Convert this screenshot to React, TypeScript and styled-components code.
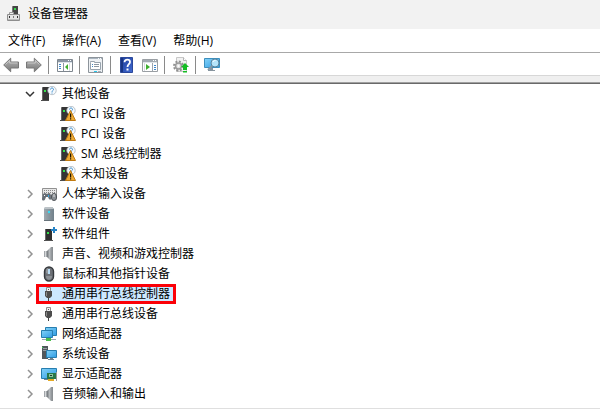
import React from 'react';
import styled, { createGlobalStyle } from 'styled-components';

const GlobalStyle = createGlobalStyle`
  * { box-sizing: border-box; }
  body {
    margin: 0;
    background: #fff;
    color: #000;
    font: 12px/20px "Open Sans", "Noto Sans CJK SC", sans-serif;
  }
  button { font: inherit; color: inherit; background: none; border: 0; padding: 0; margin: 0; }
  ul { list-style: none; margin: 0; padding: 0; }
`;

const Window = styled.div`
  display: flex;
  flex-direction: column;
  min-height: 100vh;
`;

const TitleBar = styled.header`
  display: flex;
  align-items: center;
  gap: 6px;
  height: 29px;
  padding: 0 6px 2px;
  background: #f2f2f2;
`;

const Title = styled.h1`
  margin: 0;
  font-size: 12px;
  font-weight: 400;
`;

const MenuBar = styled.nav`
  display: flex;
  gap: 17px;
  height: 24px;
  padding: 0 8px;
  border-bottom: 1px solid #a8a8a8;
`;

const MenuButton = styled.button`
  line-height: 24px;
`;

const Toolbar = styled.div`
  display: flex;
  align-items: center;
  height: 23px;
  padding: 2px 3px 0;
  border-bottom: 1px solid #d7d7d7;
`;

const ToolGroup = styled.div`
  display: flex;
  gap: 7px;
  align-items: center;

  & + & {
    border-left: 1px solid #8a8a8a;
    margin-left: 6px;
    padding-left: 8px;
  }
`;

const ToolButton = styled.button`
  display: flex;
  height: 18px;
  align-items: center;
`;

const Strip = styled.div`
  height: 8px;
  background: #efefef;
  border-bottom: 1px solid #696969;
  box-shadow: inset 0 -1px #a0a0a0;
`;

const Content = styled.main`
  flex: 1;
  border-bottom: 1px solid #dfdfdf;
`;

const Row = styled.div<{ $child?: boolean }>`
  display: flex;
  align-items: center;
  height: 20px;
  padding-left: ${(p) => (p.$child ? 55 : 24)}px;
`;

const Expander = styled.button`
  display: flex;
  align-items: center;
  justify-content: center;
  width: 12px;
  height: 20px;
`;

const NodeButton = styled.button<{ $selected?: boolean }>`
  display: flex;
  align-items: center;
  gap: 5px;
  height: 20px;
  padding: 0 6px 0 5px;
  white-space: nowrap;
  background: ${(p) => (p.$selected ? '#cce8ff' : 'transparent')};
  box-shadow: ${(p) => (p.$selected ? 'inset 0 0 0 3px #fb0007' : 'none')};
`;

const Icon = styled.svg`
  display: block;
  flex: none;
`;

const HiddenDefs = styled.svg`
  position: absolute;
`;

const Glyph = ({ children }: { children: React.ReactNode }) => (
  <Icon width={16} height={16} viewBox="0 0 16 16" aria-hidden="true">
    {children}
  </Icon>
);

const Gradients = () => (
  <HiddenDefs width={0} height={0} aria-hidden="true">
    <defs>
      <linearGradient id="screen" x1="0" y1="0" x2="1" y2="1">
        <stop offset="0" stopColor="#83d2f8" />
        <stop offset="1" stopColor="#2f9be3" />
      </linearGradient>
      <linearGradient id="steel" x1="0" y1="0" x2="0" y2="1">
        <stop offset="0" stopColor="#b4b4b4" />
        <stop offset="0.5" stopColor="#989898" />
        <stop offset="1" stopColor="#757575" />
      </linearGradient>
      <linearGradient id="cone" x1="0" y1="0" x2="1" y2="0">
        <stop offset="0" stopColor="#6f7478" />
        <stop offset="0.5" stopColor="#b5b9bc" />
        <stop offset="1" stopColor="#8c9195" />
      </linearGradient>
      <linearGradient id="case" x1="0" y1="0" x2="1" y2="0">
        <stop offset="0" stopColor="#a0aab1" />
        <stop offset="1" stopColor="#71808a" />
      </linearGradient>
      <linearGradient id="help" x1="0" y1="0" x2="1" y2="1">
        <stop offset="0" stopColor="#1f3f9c" />
        <stop offset="1" stopColor="#4069d0" />
      </linearGradient>
    </defs>
  </HiddenDefs>
);

const Tower = () => (
  <>
    <path d="M1 2l1-1h6v13H1z" fill="#353535" />
    <path d="M1 2l1-1v13H1z" fill="#666" />
    <path d="M0 14h8v1H0z" fill="#4d4d4d" />
    <path d="M3 4h2v2H3z" fill="#35e04b" />
  </>
);

const Question = () => (
  <>
    <circle cx="11" cy="4.500" r="4.200" fill="#f5f9fc" stroke="#a9b4bc" strokeWidth="0.800" />
    <path d="M9.500 3.500c0-2 3-2 3 0 0 1.200-1.500 1-1.500 2.300M11 6.500v1" fill="none" stroke="#3d8fd0" />
  </>
);

const icons = {
  app: (
    <Glyph>
      <path d="M6 1l1-1h5v9H6z" fill="#444" />
      <path d="M6 1l1-1v8H6z" fill="#777" />
      <path d="M8 2h2v2H8z" fill="#38da4c" />
      <path d="M3.500 8.500v-2h4v2" fill="#eee" stroke="#999" />
      <path d="M1.500 8.500h12v6h-12z" fill="#e4e4e4" stroke="#8d8d8d" />
      <path d="M2 13h11v1H2z" fill="#bdbdbd" />
      <path d="M3 10h1v2H3zM11 10h1v2h-1z" fill="#333" />
      <path d="M7 10h1v2H7z" fill="#777" />
    </Glyph>
  ),
  back: (
    <Glyph>
      <path d="M.7 8l7-6.800V5h7.800v6H7.700v3.800z" fill="url(#steel)" stroke="#777" strokeLinejoin="round" />
      <path d="M2.500 7.500l4.200-4V6h7.800" fill="none" stroke="#c8c8c8" />
    </Glyph>
  ),
  forward: (
    <Glyph>
      <path d="M15.300 8l-7-6.800V5H.5v6h7.800v3.800z" fill="url(#steel)" stroke="#777" strokeLinejoin="round" />
      <path d="M1.500 6h7.800V3.500l4.200 4" fill="none" stroke="#c8c8c8" />
    </Glyph>
  ),
  tree: (
    <Glyph>
      <path d="M.5 2.500h15v12H.5z" fill="#fff" stroke="#7e868e" />
      <path d="M1 3h14v3H1z" fill="#8995a3" />
      <path d="M1 5h14v1H1z" fill="#dce3ea" />
      <path d="M11 3h1v1h-1zM13 3h1v1h-1z" fill="#fff" />
      <path d="M6 6h1v8H6z" fill="#8995a3" />
      <path d="M2 7h2v1H2zM2 9h2v1H2zM2 11h2v1H2z" fill="#3d87ce" />
      <path d="M11 7v6l-3-3z" fill="#3eaf30" />
      <path d="M12 6h1v8h-1z" fill="#d7dde2" />
    </Glyph>
  ),
  properties: (
    <Glyph>
      <path d="M.5.5h14v15H.5z" fill="#eef1f4" stroke="#8d949b" />
      <path d="M1 1h13v1H1z" fill="#a9b4bf" />
      <path d="M10 1h1v1h-1zM12 1h1v1h-1z" fill="#fff" />
      <path d="M2.500 5.500v-1h4v1h6v7h-10z" fill="#fff" stroke="#98a3ad" />
      <path d="M6 7h5v1H6zM6 9h5v1H6z" fill="#8c97a1" />
      <path d="M4 7h1v1H4zM4 9h1v1H4z" fill="#4388c4" />
      <path d="M6 14h3v1H6z" fill="#27c5e8" />
      <path d="M10 14h3v1h-3z" fill="#a8afb5" />
    </Glyph>
  ),
  help: (
    <Glyph>
      <path d="M1.500.5h12v15h-12z" fill="url(#help)" stroke="#2b489b" />
      <path d="M2 1h2v14H2z" fill="#183583" />
      <path d="M5.500 5.200C5.500 1.800 11 2 11 5c0 2.200-2.500 2.300-2.500 5" fill="none" stroke="#fff" strokeWidth="1.800" />
      <path d="M7.500 11.500h2v2h-2z" fill="#fff" />
    </Glyph>
  ),
  action: (
    <Glyph>
      <path d="M.5 2.500h15v12H.5z" fill="#fff" stroke="#9a9fa4" />
      <path d="M1 3h14v3H1z" fill="#a3abb3" />
      <path d="M1 5h14v1H1z" fill="#e0e5e9" />
      <path d="M11 3h1v1h-1zM13 3h1v1h-1z" fill="#fff" />
      <path d="M4 7v6l4-3z" fill="#3eaf30" />
      <path d="M2 6h1v8H2z" fill="#d7dde2" />
      <path d="M10 6h1v8h-1z" fill="#9ba5af" />
      <path d="M12 8h2v1h-2zM12 10h2v1h-2zM12 12h2v1h-2z" fill="#3d87ce" />
    </Glyph>
  ),
  update: (
    <Glyph>
      <path d="M3.500.5h7l3 3v11h-10z" fill="#f2f2f2" stroke="#c8c8c8" />
      <path d="M10.500.5v3h3" fill="#fff" stroke="#b5b5b5" />
      <circle cx="5.500" cy="9" r="4.500" fill="none" stroke="#909090" strokeWidth="2" strokeDasharray="2 1.500" />
      <circle cx="5.500" cy="9" r="3" fill="#e3e3e3" stroke="#9a9a9a" strokeWidth="1.500" />
      <circle cx="5.500" cy="9" r="1" fill="#fff" />
      <path d="M12 6l4 4h-2v3h-4v-3H8z" fill="#16bd25" />
      <path d="M10 14h4v1.500h-4z" fill="#16bd25" />
    </Glyph>
  ),
  scan: (
    <Glyph>
      <path d="M.5 1.500h15v9H.5z" fill="url(#screen)" stroke="#3d8fbd" />
      <path d="M6 11h3v2h2v1H4v-1h2z" fill="#87949e" />
      <path d="M8.500 8.500L4 13" stroke="#8497a5" strokeWidth="2" />
      <circle cx="11" cy="6" r="4" fill="#b5e4fa" stroke="#5b849d" />
      <path d="M9 5c.5-1.200 1.500-1.500 2.500-1.500" stroke="#fff" fill="none" />
    </Glyph>
  ),
  other: (
    <Glyph>
      <Tower />
      <Question />
    </Glyph>
  ),
  warning: (
    <Glyph>
      <Tower />
      <Question />
      <path d="M10.500 4.500l5 10h-10z" fill="#edaa35" stroke="#c07a12" strokeLinejoin="round" />
      <path d="M10 7.500h1.200v4H10zM10 12.300h1.200v1.200H10z" fill="#1c1504" />
    </Glyph>
  ),
  hid: (
    <Glyph>
      <path d="M1.500 2.500h14v7h-14z" fill="#e8e8e8" stroke="#919191" />
      <path d="M3 4.500h12M3 6.500h12" stroke="#888" strokeDasharray="1 1" />
      <path d="M1 13c0-4 1-6 3-6 1 0 1 1 2 1s1-1 2-1c2 0 2 3 2 6 0 1-2 1-2.500-1l-.5-1H5l-.8 2C3.500 15 1 15 1 13z" fill="#666d75" />
      <path d="M3 9h1v1H3z" fill="#fff" />
      <path d="M7 9h1v2H7z" fill="#39a9e8" />
      <rect x="10.500" y="7.500" width="5" height="7" rx="2.500" fill="#8a8f94" stroke="#515559" />
      <path d="M12.500 8h1v3h-1z" fill="#ddd" />
    </Glyph>
  ),
  software: (
    <Glyph>
      <path d="M3 3l1-2h7l2 2v12H3z" fill="url(#case)" />
      <path d="M3 3l1-2h7l2 2z" fill="#bcc3c7" />
      <path d="M3 14h10v1H3z" fill="#67737b" />
      <circle cx="8" cy="6" r="1.200" fill="#3bdcf5" />
    </Glyph>
  ),
  component: (
    <Glyph>
      <path d="M4 3h7v11H4z" fill="#303030" />
      <path d="M4 3h1v11H4z" fill="#666" />
      <path d="M3 14h9v1H3z" fill="#505050" />
      <path d="M6 6h2v2H6z" fill="#35e04b" />
      <path d="M12 1h2v2h2v2h-2v2h-2V5h-2V3h2z" fill="#2683c6" />
    </Glyph>
  ),
  speaker: (
    <Glyph>
      <path d="M3 5h3v6H3z" fill="#a1a5a9" />
      <path d="M6 5l4-4h1v14h-1l-4-4z" fill="url(#cone)" />
      <path d="M11 1h1v14h-1z" fill="#8b9093" />
      <path d="M4 5h1v6H4z" fill="#d5d8da" />
    </Glyph>
  ),
  mouse: (
    <Glyph>
      <rect x="3.500" y="1" width="9" height="14" rx="4.500" fill="#6c7076" stroke="#35383c" strokeWidth="1.400" />
      <path d="M5 7V5c0-2 1-3 2-3v6" fill="#92969b" />
      <path d="M7 3h2v5H7z" fill="#b8dcf5" />
      <path d="M5 10c0 5 6 5 6 0" fill="#8c9095" />
    </Glyph>
  ),
  usb: (
    <Glyph>
      <path d="M5.500 1.500h4v4h-4z" fill="#eee" stroke="#8c8c8c" />
      <path d="M7 3h1v1H7z" fill="#555" />
      <path d="M4 5h7v5l-2 2H6l-2-2z" fill="#4d4d4d" />
      <path d="M5 6h1v4H5z" fill="#8a8a8a" />
      <path d="M7 12h1v3H7z" fill="#444" />
    </Glyph>
  ),
  network: (
    <Glyph>
      <path d="M4.500 1.500h11v8h-11z" fill="url(#screen)" stroke="#287eaf" />
      <path d="M.5 4.500h11v7H.5z" fill="url(#screen)" stroke="#287eaf" />
      <path d="M1 13.500h14" stroke="#9aa8af" />
      <path d="M5 12h5v3H5z" fill="#49bd4b" />
    </Glyph>
  ),
  system: (
    <Glyph>
      <path d="M1 0h6v13H1z" fill="#51585d" />
      <path d="M2 2h4v1H2zM2 4h4v1H2z" fill="#98a0a5" />
      <path d="M1 1h1v1H1z" fill="#35e04b" />
      <path d="M5.500 4.500h10v7h-10z" fill="url(#screen)" stroke="#287eaf" />
      <path d="M9 12h3v1h1v1H7v-1h2z" fill="#71818c" />
    </Glyph>
  ),
  display: (
    <Glyph>
      <path d="M.5 2.500h15v10H.5z" fill="url(#screen)" stroke="#287eaf" />
      <path d="M3 13h4v1H3z" fill="#71818c" />
      <path d="M6 7h9v6H6z" fill="#28784a" />
      <path d="M8 8h4v3H8z" fill="#8bc5a0" />
      <path d="M9 9h2v1H9z" fill="#203c2a" />
      <path d="M15 6h1v9h-1z" fill="#999" />
      <path d="M7 13h6v2H7z" fill="#e4a925" />
    </Glyph>
  ),
};

type IconName = keyof typeof icons;

const ChevronRight = () => (
  <Icon width={12} height={12} viewBox="0 0 12 12" aria-hidden="true">
    <path d="M4 2l4 4-4 4" fill="none" stroke="#939393" strokeWidth="1.500" />
  </Icon>
);

const ChevronDown = () => (
  <Icon width={12} height={12} viewBox="0 0 12 12" aria-hidden="true">
    <path d="M2 4l4 4 4-4" fill="none" stroke="#333" strokeWidth="1.500" />
  </Icon>
);

type Device = { label: string; icon: IconName; selected?: boolean; children?: Device[] };

const menus = ['文件(F)', '操作(A)', '查看(V)', '帮助(H)'];

const tools: { icon: IconName; label: string }[][] = [
  [{ icon: 'back', label: '后退' }, { icon: 'forward', label: '前进' }],
  [{ icon: 'tree', label: '显示/隐藏控制台树' }],
  [{ icon: 'properties', label: '属性' }],
  [{ icon: 'help', label: '帮助' }, { icon: 'action', label: '显示/隐藏操作窗格' }],
  [{ icon: 'update', label: '更新驱动程序' }],
  [{ icon: 'scan', label: '扫描检测硬件改动' }],
];

const devices: Device[] = [
  {
    label: '其他设备',
    icon: 'other',
    children: [
      { label: 'PCI 设备', icon: 'warning' },
      { label: 'PCI 设备', icon: 'warning' },
      { label: 'SM 总线控制器', icon: 'warning' },
      { label: '未知设备', icon: 'warning' },
    ],
  },
  { label: '人体学输入设备', icon: 'hid' },
  { label: '软件设备', icon: 'software' },
  { label: '软件组件', icon: 'component' },
  { label: '声音、视频和游戏控制器', icon: 'speaker' },
  { label: '鼠标和其他指针设备', icon: 'mouse' },
  { label: '通用串行总线控制器', icon: 'usb', selected: true },
  { label: '通用串行总线设备', icon: 'usb' },
  { label: '网络适配器', icon: 'network' },
  { label: '系统设备', icon: 'system' },
  { label: '显示适配器', icon: 'display' },
  { label: '音频输入和输出', icon: 'speaker' },
];

const DeviceNode = ({ device, child }: { device: Device; child?: boolean }) => (
  <li>
    <Row $child={child}>
      {!child && (
        <Expander aria-label={device.label} aria-expanded={Boolean(device.children)}>
          {device.children ? <ChevronDown /> : <ChevronRight />}
        </Expander>
      )}
      <NodeButton $selected={device.selected}>
        {icons[device.icon]}
        {device.label}
      </NodeButton>
    </Row>
    {device.children && (
      <ul>
        {device.children.map((item, i) => (
          <DeviceNode key={i} device={item} child />
        ))}
      </ul>
    )}
  </li>
);

export default function App() {
  return (
    <Window>
      <GlobalStyle />
      <Gradients />
      <TitleBar>
        {icons.app}
        <Title>设备管理器</Title>
      </TitleBar>
      <MenuBar>
        {menus.map((menu) => (
          <MenuButton key={menu}>{menu}</MenuButton>
        ))}
      </MenuBar>
      <Toolbar>
        {tools.map((group, i) => (
          <ToolGroup key={i}>
            {group.map((tool) => (
              <ToolButton key={tool.icon} aria-label={tool.label}>
                {icons[tool.icon]}
              </ToolButton>
            ))}
          </ToolGroup>
        ))}
      </Toolbar>
      <Strip />
      <Content>
        <ul>
          {devices.map((device) => (
            <DeviceNode key={device.label} device={device} />
          ))}
        </ul>
      </Content>
    </Window>
  );
}
